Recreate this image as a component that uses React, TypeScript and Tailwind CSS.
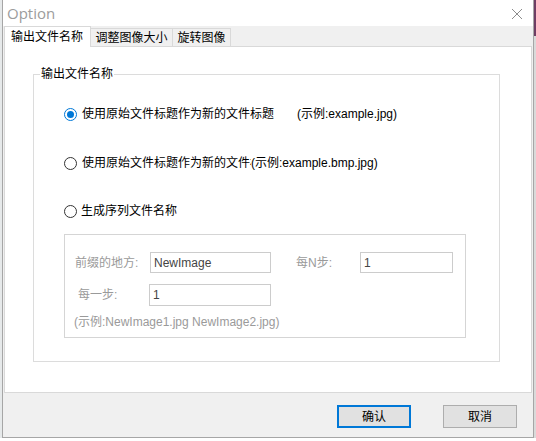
import React from "react";

const font = { fontFamily: '"Liberation Sans", "Noto Sans CJK SC", sans-serif' };

function Radio({ checked }: { checked?: boolean }) {
  return checked ? (
    <div className="w-[13px] h-[13px] rounded-full border border-[#0078d7] bg-white flex items-center justify-center shrink-0">
      <div className="w-[7px] h-[7px] rounded-full bg-[#0078d7]" />
    </div>
  ) : (
    <div className="w-[13px] h-[13px] rounded-full border border-[#333333] bg-white shrink-0" />
  );
}

function Input({ value, w, h }: { value: string; w: string; h: string }) {
  return (
    <div className={`${w} ${h} border border-[#cccccc] bg-white flex items-center pl-[3px] text-[12px] text-[#444444] shrink-0`}>
      {value}
    </div>
  );
}

export default function App() {
  return (
    <div className="w-[536px] h-[441px] bg-[#f4f4f4] flex flex-col overflow-hidden" style={font}>
      <div className="flex h-[438px]">
        <div className="w-[2px] bg-[#e6e9ea]" />
        <div className="w-[532px] h-[438px] border-l border-r border-b border-[#a6a6a6] bg-[#f0f0f0] flex flex-col">
          {/* title bar */}
          <div className="h-[26px] bg-white flex items-center justify-between pl-[4px] pr-[10px] shrink-0">
            <span className="text-[15px] text-[#9c9c9c] leading-none" style={{ fontFamily: '"Open Sans", "Liberation Sans", sans-serif' }}>
              Option
            </span>
            <svg width="12" height="12" viewBox="0 0 12 12" className="mt-[1px]">
              <path d="M1 1 L11 11 M11 1 L1 11" stroke="#8c8c8c" strokeWidth="1" fill="none" />
            </svg>
          </div>
          {/* tabs */}
          <div className="h-[20px] flex items-end pl-[1px] shrink-0 relative z-10">
            <div className="w-[87px] h-[21px] -mb-px bg-white border-t border-l border-r border-[#d9d9d9] flex items-center pl-[6px] text-[12px] text-black leading-none">
              输出文件名称
            </div>
            <div className="w-[82px] h-[18px] bg-[#f0f0f0] border-t border-r border-[#d9d9d9] flex items-center justify-center text-[12px] text-black leading-none">
              调整图像大小
            </div>
            <div className="w-[58px] h-[18px] bg-[#f0f0f0] border-t border-r border-[#d9d9d9] flex items-center justify-center text-[12px] text-black leading-none">
              旋转图像
            </div>
          </div>
          {/* panel */}
          <div className="ml-[1px] mr-[1px] h-[347px] bg-white border border-[#d9d9d9] shrink-0 pt-[27px] pl-[28px]">
            <div className="relative w-[467px] h-[288px] border border-[#dcdcdc] pt-[31px] pl-[30px]">
              <span className="absolute left-[6px] top-[-8px] bg-white px-[1px] text-[12px] leading-[14px] text-black">
                输出文件名称
              </span>
              <div className="flex items-center h-[16px] text-[12px] text-black">
                <Radio checked />
                <span className="ml-[5px] w-[215px] whitespace-nowrap">使用原始文件标题作为新的文件标题</span>
                <span className="whitespace-nowrap">(示例:example.jpg)</span>
              </div>
              <div className="flex items-center h-[16px] mt-[33px] text-[12px] text-black">
                <Radio />
                <span className="ml-[5px] w-[169px] overflow-hidden whitespace-nowrap">使用原始文件标题作为新的文件标题</span>
                <span className="whitespace-nowrap">(示例:example.bmp.jpg)</span>
              </div>
              <div className="flex items-center h-[16px] mt-[32px] text-[12px] text-black">
                <Radio />
                <span className="ml-[4px] whitespace-nowrap">生成序列文件名称</span>
              </div>
              <div className="mt-[15px] w-[402px] h-[104px] border border-[#d5d5d5] pt-[17px] pl-[10px] text-[12px] text-[#9a9a9a]">
                <div className="flex items-center h-[21px]">
                  <span className="w-[75px] whitespace-nowrap">前缀的地方:</span>
                  <Input value="NewImage" w="w-[121px]" h="h-[21px]" />
                  <span className="ml-[25px] w-[64px] whitespace-nowrap">每N步:</span>
                  <Input value="1" w="w-[93px]" h="h-[21px]" />
                </div>
                <div className="flex items-center h-[22px] mt-[11px]">
                  <span className="ml-[3px] w-[71px] whitespace-nowrap">每一步:</span>
                  <Input value="1" w="w-[122px]" h="h-[22px]" />
                </div>
                <div className="mt-[9px] h-[14px] leading-[14px] -ml-[1px] whitespace-nowrap">
                  (示例:NewImage1.jpg NewImage2.jpg)
                </div>
              </div>
            </div>
          </div>
          {/* buttons */}
          <div className="flex justify-end gap-[32px] pt-[12px] pr-[16px]">
            <button className="w-[74px] h-[23px] bg-[#e1e1e1] border-2 border-[#0078d7] text-[12px] text-black flex items-center justify-center">
              确认
            </button>
            <button className="w-[74px] h-[23px] bg-[#e1e1e1] border border-[#adadad] text-[12px] text-black flex items-center justify-center">
              取消
            </button>
          </div>
        </div>
        <div className="w-[2px] flex flex-col">
          <div className="h-[36px] bg-[#6e3d63]" />
          <div className="flex-1 bg-[#dadada]" />
        </div>
      </div>
      <div className="flex-1 bg-white" />
    </div>
  );
}
